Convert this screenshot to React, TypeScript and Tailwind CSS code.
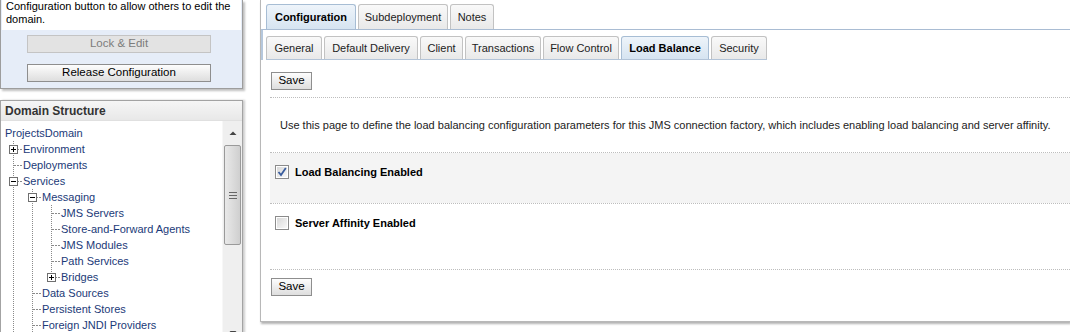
import React from "react";

const FONT = { fontFamily: "'Liberation Sans', Arial, sans-serif" };

type Node = { label: string; level: number; box?: "plus" | "minus"; cells: ("line" | "none")[]; last: boolean };

const tree: Node[] = [
  { label: "Environment", level: 1, box: "plus", cells: [], last: false },
  { label: "Deployments", level: 1, cells: [], last: false },
  { label: "Services", level: 1, box: "minus", cells: [], last: false },
  { label: "Messaging", level: 2, box: "minus", cells: ["line"], last: false },
  { label: "JMS Servers", level: 3, cells: ["line", "line"], last: false },
  { label: "Store-and-Forward Agents", level: 3, cells: ["line", "line"], last: false },
  { label: "JMS Modules", level: 3, cells: ["line", "line"], last: false },
  { label: "Path Services", level: 3, cells: ["line", "line"], last: false },
  { label: "Bridges", level: 3, box: "plus", cells: ["line", "line"], last: true },
  { label: "Data Sources", level: 2, cells: ["line"], last: false },
  { label: "Persistent Stores", level: 2, cells: ["line"], last: false },
  { label: "Foreign JNDI Providers", level: 2, cells: ["line"], last: false },
];

function VLine() {
  return (
    <svg width="19" height="16" className="block shrink-0">
      <line x1="9.5" y1="0" x2="9.5" y2="16" stroke="#8a8a8a" strokeDasharray="1 1" shapeRendering="crispEdges" />
    </svg>
  );
}

function Elbow({ last, box }: { last: boolean; box?: "plus" | "minus" }) {
  return (
    <svg width="19" height="16" className="block shrink-0">
      <line x1="9.5" y1="0" x2="9.5" y2={last ? 8 : 16} stroke="#8a8a8a" strokeDasharray="1 1" shapeRendering="crispEdges" />
      <line x1="10" y1="8.5" x2="19" y2="8.5" stroke="#8a8a8a" strokeDasharray="2 1" shapeRendering="crispEdges" />
      {box && (
        <g shapeRendering="crispEdges">
          <rect x="5.5" y="4.5" width="8" height="8" fill="#fff" stroke="#6f6f6f" />
          <line x1="7" y1="8.5" x2="12" y2="8.5" stroke="#000" />
          {box === "plus" && <line x1="9.5" y1="6" x2="9.5" y2="11" stroke="#000" />}
        </g>
      )}
    </svg>
  );
}

function Tab({ label, w, selected }: { label: string; w: number; selected?: boolean }) {
  return (
    <div
      style={{ width: w }}
      className={
        "h-full flex items-center justify-center rounded-t-[3px] border border-b-0 text-[11px] " +
        (selected
          ? "border-[#a7bdd4] bg-gradient-to-b from-[#eef4fa] to-[#d6e4f1] font-bold text-black"
          : "border-[#c2c2c2] bg-gradient-to-b from-[#f9f9f9] to-[#e9e9e9] text-[#222]")
      }
    >
      {label}
    </div>
  );
}

function Button({ label, className = "", disabled }: { label: string; className?: string; disabled?: boolean }) {
  return (
    <div
      className={
        "flex items-center justify-center border text-[11.5px] " +
        (disabled
          ? "border-[#c4c4c4] bg-[#e3e3e3] text-[#7c7c7c]"
          : "border-[#8e8e8e] bg-gradient-to-b from-[#fdfdfd] to-[#dedede] text-black") +
        " " +
        className
      }
    >
      {label}
    </div>
  );
}

function Checkbox({ checked }: { checked?: boolean }) {
  return (
    <svg width="14" height="14" className="block shrink-0">
      <defs>
        <linearGradient id={checked ? "cg1" : "cg2"} x1="0" y1="0" x2="1" y2="1">
          <stop offset="0" stopColor="#d8d8d8" />
          <stop offset="1" stopColor="#f8f8f8" />
        </linearGradient>
      </defs>
      <rect x="0.5" y="0.5" width="13" height="13" fill="#fff" stroke="#8b8b8b" shapeRendering="crispEdges" />
      <rect x="2" y="2" width="10" height="10" fill={`url(#${checked ? "cg1" : "cg2"})`} />
      {checked && <path d="M3.5 7 L6 10 L10.8 3" fill="none" stroke="#3a5d9e" strokeWidth="1.8" />}
    </svg>
  );
}

function Dotted() {
  return <div className="h-0 border-t border-dotted border-[#bdbdbd]" />;
}

export default function App() {
  return (
    <div style={FONT} className="w-[1070px] h-[332px] overflow-hidden bg-white flex text-black">
      {/* Left column */}
      <div className="w-[244px] shrink-0 flex flex-col">
        <div className="h-[89px] shrink-0 border border-t-0 border-[#9d9d9d] bg-[#e6edf8] shadow-[2px_2px_2px_rgba(0,0,0,0.25)] mr-[1px] flex flex-col px-[1px]">
          <div className="h-[30px] bg-white pl-[4px] text-[11px] leading-[13px] overflow-hidden">
            Configuration button to allow others to edit the
            <br />
            domain.
          </div>
          <Button label="Lock & Edit" disabled className="mt-[5px] ml-[25px] w-[184px] h-[18px]" />
          <Button label="Release Configuration" className="mt-[11px] ml-[25px] w-[184px] h-[18px]" />
        </div>
        <div className="mt-[11px] h-[242px] shrink-0 border border-[#a3a3a3] mr-[1px] shadow-[2px_0_2px_rgba(0,0,0,0.2)] flex flex-col">
          <div className="h-[20px] shrink-0 bg-gradient-to-b from-[#f6f6f6] to-[#e8e8e8] flex items-center pl-[4px] text-[12px] font-bold text-[#333] border-b border-[#e0e0e0]">
            Domain Structure
          </div>
          <div className="flex-1 flex min-h-0">
            <div className="flex-1 pt-[4px] pl-[3px] text-[11px] text-[#1b3a78] leading-[16px]">
              <div className="h-[16px] pl-[1px]">ProjectsDomain</div>
              {tree.map((n) => (
                <div key={n.label} className="flex h-[16px] items-center">
                  {n.cells.map((c, i) => (c === "line" ? <VLine key={i} /> : <div key={i} className="w-[19px]" />))}
                  <Elbow last={n.last} box={n.box} />
                  <span className="whitespace-nowrap">{n.label}</span>
                </div>
              ))}
            </div>
            <div className="w-[20px] shrink-0 bg-[#efefef] border-l border-[#f7f7f7] flex flex-col items-center">
              <svg width="20" height="24" className="block shrink-0">
                <path d="M6.5 14 L10 10.5 L13.5 14 Z" fill="#444" />
              </svg>
              <div className="w-[17px] h-[100px] rounded-[2px] border border-[#9a9a9a] bg-gradient-to-r from-[#e9e9e9] via-[#dcdcdc] to-[#cfcfcf] flex flex-col items-center justify-center gap-[2px]">
                <div className="w-[8px] h-[1px] bg-[#666]" />
                <div className="w-[8px] h-[1px] bg-[#666]" />
                <div className="w-[8px] h-[1px] bg-[#666]" />
              </div>
              <div className="flex-1" />
              <svg width="20" height="14" className="block shrink-0">
                <path d="M6.5 4 L10 7.5 L13.5 4 Z" fill="#444" />
              </svg>
            </div>
          </div>
        </div>
      </div>

      {/* Right panel */}
      <div className="ml-[16px] flex-1 h-[322px] border-l border-b border-[#b8b8b8] shadow-[1px_2px_2px_rgba(0,0,0,0.3)] flex flex-col">
        <div className="h-[29px] pt-[4px] pl-[5px] flex gap-[2px] items-end">
          <Tab label="Configuration" w={90} selected />
          <Tab label="Subdeployment" w={90} />
          <Tab label="Notes" w={44} />
        </div>
        <div className="border-t border-[#a9bcd3] border-l-[2px] border-l-[#b5c7dc] h-[31px] pl-[3px] pt-[6px]">
          <div className="h-[24px] w-fit flex gap-[2px] border-b border-[#b3c4d8]">
            <Tab label="General" w={56} />
            <Tab label="Default Delivery" w={94} />
            <Tab label="Client" w={43} />
            <Tab label="Transactions" w={76} />
            <Tab label="Flow Control" w={76} />
            <Tab label="Load Balance" w={88} selected />
            <Tab label="Security" w={56} />
          </div>
        </div>
        <div className="pl-[9px] flex flex-col">
          <Button label="Save" className="mt-[12px] ml-[1px] w-[41px] h-[18px]" />
          <div className="mt-[7px]">
            <Dotted />
          </div>
          <div className="h-[54px] flex items-center pl-[10px] text-[11px] text-[#222] whitespace-nowrap">
            Use this page to define the load balancing configuration parameters for this JMS connection factory, which includes enabling load balancing and server affinity.
          </div>
          <Dotted />
          <div className="h-[50px] bg-[#f4f4f4] flex items-center pl-[5px] gap-[6px] pb-[12px]">
            <Checkbox checked />
            <span className="text-[11px] font-bold">Load Balancing Enabled</span>
          </div>
          <Dotted />
          <div className="h-[65px] flex items-start pt-[12px] pl-[5px] gap-[6px]">
            <Checkbox />
            <span className="text-[11px] font-bold leading-[14px]">Server Affinity Enabled</span>
          </div>
          <Dotted />
          <Button label="Save" className="mt-[8px] ml-[1px] w-[41px] h-[18px]" />
        </div>
      </div>
    </div>
  );
}
